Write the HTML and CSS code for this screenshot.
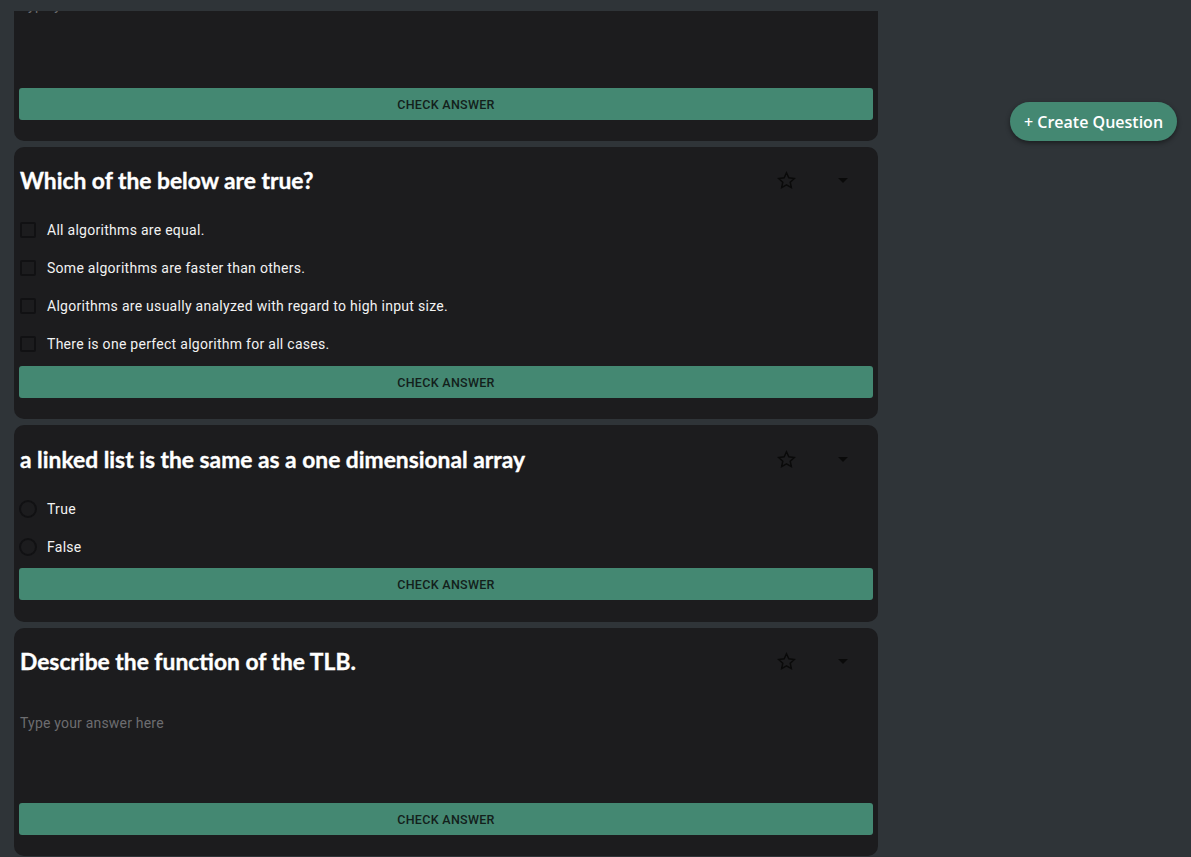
FILE: index.html
```html
<!DOCTYPE html>
<html lang="en">
<head>
<meta charset="utf-8">
<title>Questions</title>
<link rel="stylesheet" href="styles.css">
</head>
<body>
<main class="feed">
  <div class="cards">
    <section class="card card-partial">
      <div class="answer answer-top"><span class="placeholder">Type your answer here</span></div>
      <button class="check">CHECK ANSWER</button>
    </section>

    <section class="card">
      <header class="card-head">
        <h2 class="title">Which of the below are true?</h2>
        <div class="actions">
          <span class="icon-btn"><svg class="star" viewBox="0 0 24 24"><path d="M12 3.2l2.65 5.75 6.25.7-4.65 4.3 1.25 6.15L12 17l-5.5 3.1 1.25-6.15L3.1 9.65l6.25-.7z" fill="none" stroke="#0a0a0a" stroke-width="1.7"/></svg></span>
          <span class="icon-btn"><span class="caret"></span></span>
        </div>
      </header>
      <ul class="options">
        <li class="option"><span class="box"></span>All algorithms are equal.</li>
        <li class="option"><span class="box"></span>Some algorithms are faster than others.</li>
        <li class="option"><span class="box"></span>Algorithms are usually analyzed with regard to high input size.</li>
        <li class="option"><span class="box"></span>There is one perfect algorithm for all cases.</li>
      </ul>
      <button class="check">CHECK ANSWER</button>
    </section>

    <section class="card card-radio">
      <header class="card-head">
        <h2 class="title">a linked list is the same as a one dimensional array</h2>
        <div class="actions">
          <span class="icon-btn"><svg class="star" viewBox="0 0 24 24"><path d="M12 3.2l2.65 5.75 6.25.7-4.65 4.3 1.25 6.15L12 17l-5.5 3.1 1.25-6.15L3.1 9.65l6.25-.7z" fill="none" stroke="#0a0a0a" stroke-width="1.7"/></svg></span>
          <span class="icon-btn"><span class="caret"></span></span>
        </div>
      </header>
      <ul class="options">
        <li class="option"><span class="radio"></span>True</li>
        <li class="option"><span class="radio"></span>False</li>
      </ul>
      <button class="check">CHECK ANSWER</button>
    </section>

    <section class="card">
      <header class="card-head">
        <h2 class="title">Describe the function of the TLB.</h2>
        <div class="actions">
          <span class="icon-btn"><svg class="star" viewBox="0 0 24 24"><path d="M12 3.2l2.65 5.75 6.25.7-4.65 4.3 1.25 6.15L12 17l-5.5 3.1 1.25-6.15L3.1 9.65l6.25-.7z" fill="none" stroke="#0a0a0a" stroke-width="1.7"/></svg></span>
          <span class="icon-btn"><span class="caret"></span></span>
        </div>
      </header>
      <div class="answer"><span class="placeholder">Type your answer here</span></div>
      <button class="check">CHECK ANSWER</button>
    </section>
  </div>
</main>
<aside class="side">
  <button class="create">+ Create Question</button>
</aside>
</body>
</html>
```

FILE: styles.css
```css
* { box-sizing: border-box; }
html, body { height: 100%; }
body {
  margin: 0;
  background: #2f3438;
  display: flex;
  align-items: flex-start;
  overflow: hidden;
  font-family: Roboto, "Liberation Sans", sans-serif;
}
.feed {
  width: 864px;
  margin: 11px 0 0 14px;
  height: 846px;
  overflow: hidden;
  flex: none;
}
.cards {
  margin-top: -34px;
  display: flex;
  flex-direction: column;
  gap: 6px;
}
.card {
  background: #1c1c1e;
  border-radius: 10px;
  padding: 18px 5px 21px;
  display: flex;
  flex-direction: column;
}
.card-partial {
  padding-top: 0;
}
.card-partial .answer {
  margin-top: 0;
}
.card-head {
  display: flex;
  align-items: center;
  height: 30px;
  padding-left: 1px;
}
.title {
  flex: 1;
  margin: 0;
  font-family: Lato, "Open Sans", sans-serif;
  font-weight: 700;
  font-size: 22.8px;
  line-height: 30px;
  color: #ffffff;
  -webkit-text-stroke: 0.35px #ffffff;
  white-space: nowrap;
}
.actions {
  display: flex;
  gap: 17px;
  margin-right: 10px;
}
.icon-btn {
  width: 40px;
  height: 30px;
  display: flex;
  align-items: center;
  justify-content: center;
}
.star {
  width: 21px;
  height: 21px;
}
.caret {
  width: 0;
  height: 0;
  border-left: 5px solid transparent;
  border-right: 5px solid transparent;
  border-top: 5px solid #0a0a0a;
}
.options {
  list-style: none;
  margin: 16px 0 0;
  padding: 0 0 0 1px;
}
.card-radio { padding-top: 19px; padding-bottom: 22px; }
.card-radio .options { margin-top: 16px; }
.card-radio .check { margin-top: 2px; }
.option {
  height: 38px;
  display: flex;
  align-items: center;
  color: #f2f2f2;
  font-size: 14px;
  letter-spacing: 0.28px;
}
.box {
  width: 16px;
  height: 16px;
  border: 2px solid #111113;
  border-radius: 2px;
  margin-right: 11px;
}
.radio {
  width: 18px;
  height: 18px;
  border: 2px solid #111113;
  border-radius: 50%;
  margin-left: -1px;
  margin-right: 10px;
}
.answer {
  margin-top: 16px;
  height: 108px;
  padding: 21px 1px 0;
}
.answer-top { padding-top: 18px; }
.placeholder {
  font-size: 14px;
  line-height: 18px;
  letter-spacing: 0.2px;
  color: #6d6d70;
}
.check {
  margin-top: 3px;
  height: 32px;
  width: 100%;
  border: none;
  border-radius: 3px;
  background: #448872;
  color: #13201b;
  font-family: Roboto, "Liberation Sans", sans-serif;
  font-weight: 500;
  font-size: 12.5px;
  letter-spacing: 0.3px;
  cursor: pointer;
}
.side {
  padding: 102px 0 0 132px;
}
.create {
  height: 39px;
  border: none;
  border-radius: 20px;
  padding: 0 14px;
  background: #448872;
  color: #ffffff;
  font-family: "Open Sans", sans-serif;
  font-weight: 600;
  font-size: 16px;
  box-shadow: 0 2px 5px rgba(0, 0, 0, 0.45);
  white-space: nowrap;
}
```
